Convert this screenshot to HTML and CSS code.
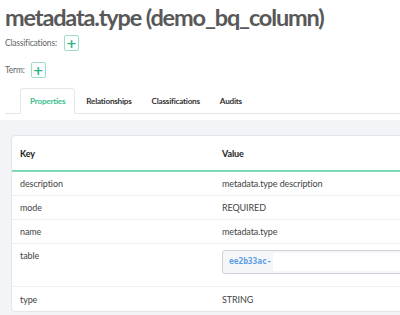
FILE: index.html
```html
<!DOCTYPE html>
<html lang="en">
<head>
    <meta charset="UTF-8" />
    <title>metadata.type (demo_bq_column)</title>
    <link rel="stylesheet" href="styles.css">
</head>
<body>
    <h1 class="title">metadata.type (demo_bq_column)</h1>
    <div class="meta-row classifications">
        <span class="meta-label">Classifications:</span>
        <button class="add-btn">+</button>
    </div>
    <div class="meta-row term">
        <span class="meta-label">Term:</span>
        <button class="add-btn">+</button>
    </div>
    <nav class="tabs">
        <div class="tab active">Properties</div>
        <div class="tab">Relationships</div>
        <div class="tab">Classifications</div>
        <div class="tab">Audits</div>
    </nav>
    <section class="panel">
        <div class="card">
            <div class="row head">
                <div class="cell">Key</div>
                <div class="cell">Value</div>
            </div>
            <div class="row">
                <div class="cell">description</div>
                <div class="cell">metadata.type description</div>
            </div>
            <div class="row">
                <div class="cell">mode</div>
                <div class="cell">REQUIRED</div>
            </div>
            <div class="row">
                <div class="cell">name</div>
                <div class="cell">metadata.type</div>
            </div>
            <div class="row tall">
                <div class="cell">table</div>
                <div class="cell">
                    <div class="guid-box">
                        <span class="guid">ee2b33ac-</span>
                        <span class="guid-rest"></span>
                    </div>
                </div>
            </div>
            <div class="row last">
                <div class="cell">type</div>
                <div class="cell">STRING</div>
            </div>
        </div>
    </section>
</body>
</html>
```

FILE: styles.css
```css
* {
    box-sizing: border-box;
}
html, body {
    overflow: hidden;
}
body {
    margin: 0;
    font-family: Lato, 'Noto Sans', sans-serif;
    color: #444;
    background: white;
    width: 400px;
    height: 315px;
}
.title {
    margin: 0;
    padding: 0 5px;
    font-size: 23.5px;
    font-weight: 700;
    letter-spacing: -1.15px;
    line-height: 34px;
    color: #585858;
    white-space: nowrap;
}
.meta-row {
    display: flex;
    align-items: center;
    padding-left: 5px;
    font-size: 8.5px;
    letter-spacing: -0.2px;
    color: #666;
}
.classifications {
    margin-top: 1px;
}
.classifications .add-btn {
    margin-left: 7px;
}
.term {
    margin-top: 11px;
}
.term .add-btn {
    margin-left: 6px;
}
.add-btn {
    width: 15px;
    height: 16px;
    padding: 0;
    border: 1px solid #9ddcc6;
    border-radius: 2px;
    background: white;
    color: #2fb58a;
    font-family: 'DejaVu Sans', sans-serif;
    font-size: 13px;
    font-weight: 700;
    line-height: 13px;
    text-align: center;
}
.tabs {
    display: flex;
    margin: 10px 0 0 5px;
    padding-left: 15px;
    border-bottom: 1px solid #e6e6e6;
    height: 26px;
}
.tab {
    padding: 0 10px;
    font-size: 8.2px;
    font-weight: 700;
    letter-spacing: -0.25px;
    color: #333;
    line-height: 25px;
    margin-top: 1px;
}
.tab.active {
    padding: 0 9px;
    margin-right: 1px;
    color: #3cc08f;
    border: 1px solid #e6e6e6;
    border-bottom: 1px solid white;
    border-radius: 4px 4px 0 0;
    background: white;
    height: 26px;
    margin-top: 0;
}
.panel {
    margin-top: 6px;
    background: #f3f4f8;
    padding: 15px 0 10px 11px;
}
.card {
    width: 420px;
    background: white;
    border: 1px solid #e4e5ea;
    border-radius: 4px;
}
.row {
    display: grid;
    grid-template-columns: 202px 1fr;
    align-items: center;
    height: 24px;
    border-bottom: 1px solid #eeeff2;
    font-size: 9px;
    letter-spacing: -0.1px;
    color: #444;
}
.row .cell {
    padding-left: 8px;
}
.row.head {
    height: 36px;
    font-weight: 700;
    color: #222;
    border-bottom: 2px solid #7dd8b3;
}
.row.tall {
    height: 43px;
    align-items: start;
}
.row.tall .cell {
    padding-top: 6px;
}
.row.last {
    border-bottom: none;
}
.guid-box {
    display: flex;
    align-items: stretch;
    height: 24px;
    border: 1px solid #cfd3da;
    border-radius: 3px;
    background: #f4f6fa;
    padding: 2px 2px 2px 6px;
}
.guid {
    font-family: 'DejaVu Sans Mono', monospace;
    font-size: 8px;
    font-weight: 700;
    color: #5a9be6;
    line-height: 18px;
}
.guid-rest {
    flex: 1;
    background: white;
    margin-left: 2px;
}
```
